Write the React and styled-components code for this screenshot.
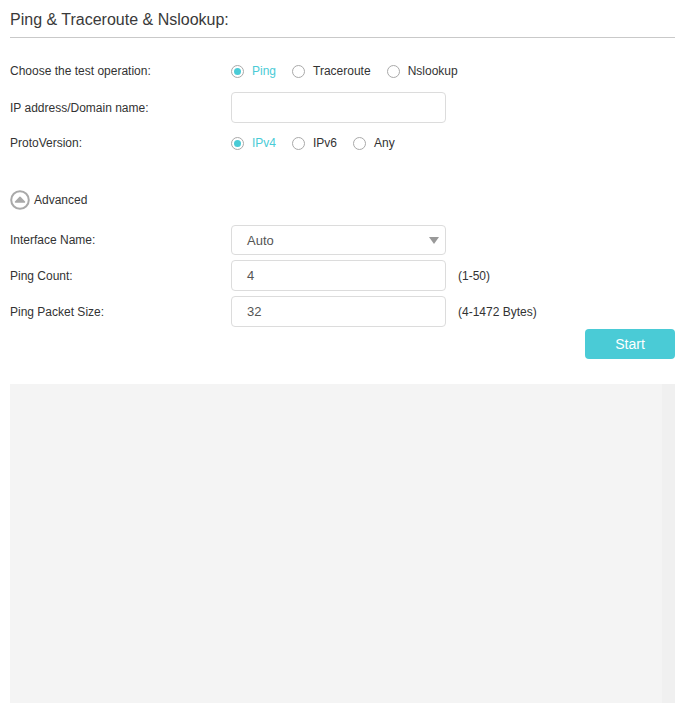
import React from "react";
import styled, { createGlobalStyle } from "styled-components";

const Global = createGlobalStyle`
  html, body { margin: 0; padding: 0; background: #fff; }
  body { font-family: Arial, "Liberation Sans", sans-serif; color: #333; }
`;

const Page = styled.div`
  padding: 0 11px 0 10px;
  width: 686px;
  box-sizing: border-box;
`;

const Title = styled.h2`
  margin: 0;
  padding: 11px 0 8px 0;
  font-size: 16px;
  font-weight: normal;
  line-height: 18px;
  color: #3a3a3a;
  border-bottom: 1px solid #c9c9c9;
`;

const Form = styled.div`
  display: flex;
  flex-direction: column;
  padding-top: 20px;
`;

const Row = styled.div`
  display: grid;
  grid-template-columns: 221px 215px auto;
  align-items: center;
  min-height: ${(p) => p.h || 30}px;
  margin-bottom: ${(p) => p.mb || 0}px;
  font-size: 12px;
`;

const Label = styled.div`
  font-size: 12px;
  color: #333;
`;

const RadioGroup = styled.div`
  display: flex;
  align-items: center;
  white-space: nowrap;
`;

const RadioItem = styled.label`
  display: flex;
  align-items: center;
  margin-right: ${(p) => p.mr}px;
  color: ${(p) => (p.checked ? "#4acbd6" : "#333")};
  font-size: 12px;
`;

const Circle = styled.span`
  width: 13px;
  height: 13px;
  border: 1px solid #a9a9a9;
  border-radius: 50%;
  box-sizing: border-box;
  margin-right: 8px;
  display: flex;
  align-items: center;
  justify-content: center;
  &::after {
    content: "";
    display: ${(p) => (p.checked ? "block" : "none")};
    width: 7px;
    height: 7px;
    border-radius: 50%;
    background: #4acbd6;
  }
`;

const Input = styled.div`
  height: ${(p) => p.h || 31}px;
  box-sizing: border-box;
  border: 1px solid #dcdcdc;
  border-radius: 4px;
  background: #fff;
  display: flex;
  align-items: center;
  padding-left: 15px;
  font-size: 13px;
  color: #555;
  position: relative;
`;

const Arrow = styled.span`
  position: absolute;
  right: 6px;
  top: 11px;
  width: 0;
  height: 0;
  border-left: 5px solid transparent;
  border-right: 5px solid transparent;
  border-top: 7px solid #999;
`;

const Hint = styled.div`
  padding-left: 12px;
  font-size: 12px;
  color: #333;
`;

const AdvancedToggle = styled.div`
  display: flex;
  align-items: center;
  font-size: 12px;
  color: #333;
  margin: 34px 0 15px 0;
  svg { margin-right: 4px; }
`;

const ButtonBar = styled.div`
  display: flex;
  justify-content: flex-end;
  margin-top: 2px;
`;

const StartButton = styled.button`
  width: 90px;
  height: 30px;
  border: none;
  border-radius: 4px;
  background: #4acbd6;
  color: #fff;
  font-family: Arial, "Liberation Sans", sans-serif;
  font-size: 14px;
  padding: 0;
`;

const Output = styled.div`
  margin-top: 25px;
  height: 319px;
  background: #f4f4f4;
  display: flex;
  justify-content: flex-end;
`;

const ScrollTrack = styled.div`
  width: 13px;
  background: #f0f0f0;
`;

function Radio({ label, checked, mr }) {
  return (
    <RadioItem checked={checked} mr={mr}>
      <Circle checked={checked} />
      {label}
    </RadioItem>
  );
}

export default function App() {
  return (
    <Page>
      <Global />
      <Title>Ping &amp; Traceroute &amp; Nslookup:</Title>
      <Form>
        <Row h={26} mb={8}>
          <Label>Choose the test operation:</Label>
          <RadioGroup>
            <Radio label="Ping" checked mr={16} />
            <Radio label="Traceroute" mr={16} />
            <Radio label="Nslookup" mr={0} />
          </RadioGroup>
        </Row>
        <Row h={31} mb={7}>
          <Label>IP address/Domain name:</Label>
          <Input />
        </Row>
        <Row h={26}>
          <Label>ProtoVersion:</Label>
          <RadioGroup>
            <Radio label="IPv4" checked mr={16} />
            <Radio label="IPv6" mr={16} />
            <Radio label="Any" mr={0} />
          </RadioGroup>
        </Row>
        <AdvancedToggle>
          <svg width="20" height="20" viewBox="0 0 20 20">
            <circle cx="10" cy="10" r="8.8" fill="none" stroke="#a9a9a9" strokeWidth="2" />
            <path d="M5.5 12 L10 7.2 L14.5 12 Z" fill="#a9a9a9" stroke="#a9a9a9" strokeWidth="1.5" strokeLinejoin="round" />
          </svg>
          Advanced
        </AdvancedToggle>
        <Row h={30} mb={5}>
          <Label>Interface Name:</Label>
          <Input h={30}>
            Auto
            <Arrow />
          </Input>
        </Row>
        <Row h={31} mb={5}>
          <Label>Ping Count:</Label>
          <Input>4</Input>
          <Hint>(1-50)</Hint>
        </Row>
        <Row h={31}>
          <Label>Ping Packet Size:</Label>
          <Input>32</Input>
          <Hint>(4-1472 Bytes)</Hint>
        </Row>
        <ButtonBar>
          <StartButton>Start</StartButton>
        </ButtonBar>
        <Output>
          <ScrollTrack />
        </Output>
      </Form>
    </Page>
  );
}
